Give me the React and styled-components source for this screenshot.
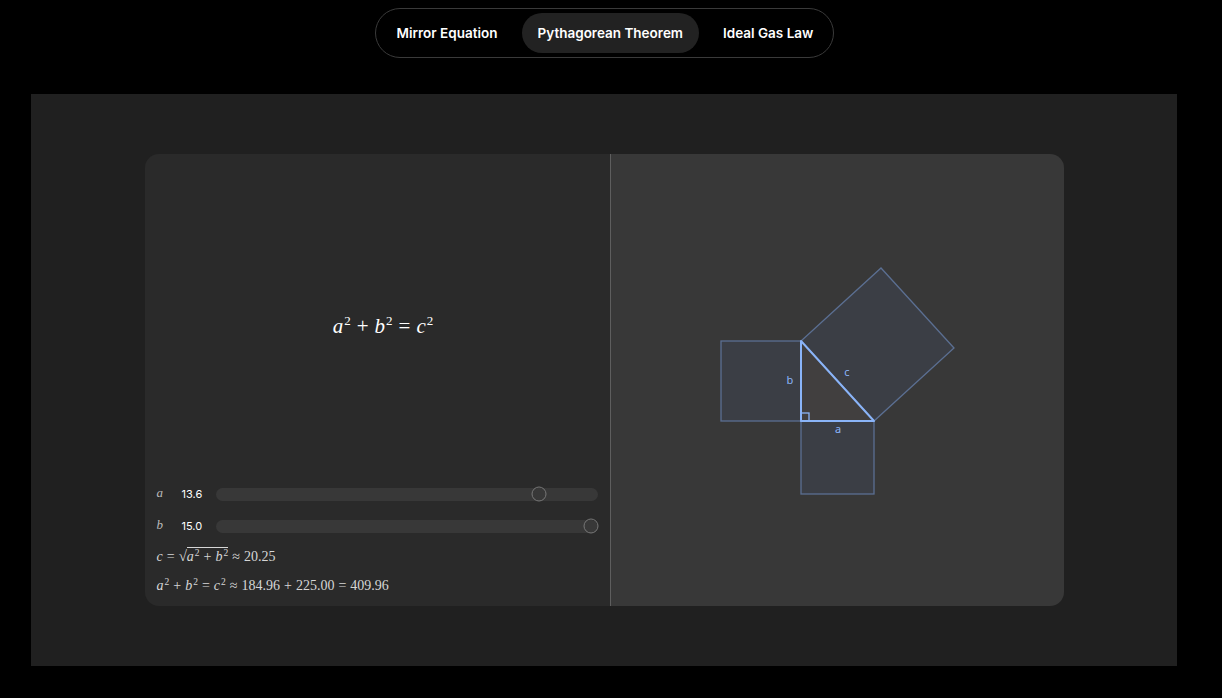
import React from "react";
import styled, { createGlobalStyle } from "styled-components";

const GlobalStyle = createGlobalStyle`
  html, body {
    margin: 0;
    padding: 0;
    background: #000000;
    font-family: Inter, "Noto Sans", sans-serif;
  }
`;

const tabs = ["Mirror Equation", "Pythagorean Theorem", "Ideal Gas Law"];

const A = 13.6;
const B = 15.0;
const MIN = 5;
const MAX = 15;

const Slider = ({ name, value }) => {
  const pct = (value - MIN) / (MAX - MIN);
  return (
    <SliderRow>
      <VarLabel>{name}</VarLabel>
      <Value>{value.toFixed(1)}</Value>
      <Track>
        <Thumb style={{ left: `calc(7px + ${pct} * (100% - 14px))` }} />
      </Track>
    </SliderRow>
  );
};

export default function App() {
  const c = Math.sqrt(A * A + B * B);
  return (
    <Page>
      <GlobalStyle />
      <TabBar>
        {tabs.map((t) => (
          <Tab key={t} $active={t === "Pythagorean Theorem"}>
            {t}
          </Tab>
        ))}
      </TabBar>
      <Stage>
        <Card>
          <LeftPane>
            <FormulaArea>
              <BigMath>
                <V>a</V>
                <Sup>2</Sup>
                <Op>+</Op>
                <V>b</V>
                <Sup>2</Sup>
                <Op>=</Op>
                <V>c</V>
                <Sup>2</Sup>
              </BigMath>
            </FormulaArea>
            <Controls>
              <Slider name="a" value={A} />
              <Slider name="b" value={B} />
              <SmallMath>
                <V>c</V>
                <Op $small>=</Op>
                <Root>√</Root>
                <Radicand>
                  <V>a</V>
                  <SupS>2</SupS>
                  <Op $small>+</Op>
                  <V>b</V>
                  <SupS>2</SupS>
                </Radicand>
                <Op $small>≈</Op>
                <span>{c.toFixed(2)}</span>
              </SmallMath>
              <SmallMath>
                <V>a</V>
                <SupS>2</SupS>
                <Op $small>+</Op>
                <V>b</V>
                <SupS>2</SupS>
                <Op $small>=</Op>
                <V>c</V>
                <SupS>2</SupS>
                <Op $small>≈</Op>
                <span>{(A * A).toFixed(2)}</span>
                <Op $small>+</Op>
                <span>{(B * B).toFixed(2)}</span>
                <Op $small>=</Op>
                <span>{(A * A + B * B).toFixed(2)}</span>
              </SmallMath>
            </Controls>
          </LeftPane>
          <RightPane>
            <Diagram viewBox="0 0 453 452" width="453" height="452">
              <g fill="#3b3e45" stroke="#5b6f92" strokeWidth="1.3">
                <rect x="110" y="187" width="80" height="80" />
                <rect x="190" y="267" width="73" height="73" />
                <polygon points="190,187 263,267 343,194 270,114" />
              </g>
              <polygon
                points="190,187 263,267 190,267"
                fill="#413f3f"
                stroke="#8ab4f8"
                strokeWidth="2"
                strokeLinejoin="round"
              />
              <rect x="190" y="259" width="8" height="8" fill="none" stroke="#8ab4f8" strokeWidth="1.3" />
              <g fill="#8ab4f8" fontFamily="'Noto Sans', sans-serif" fontSize="11" textAnchor="middle">
                <text x="179" y="230">b</text>
                <text x="236" y="222">c</text>
                <text x="227" y="279">a</text>
              </g>
            </Diagram>
          </RightPane>
        </Card>
      </Stage>
    </Page>
  );
}

const Page = styled.div`
  width: 1207px;
  min-height: 698px;
  display: flex;
  flex-direction: column;
  align-items: center;
  padding-top: 8px;
  box-sizing: border-box;
`;

const TabBar = styled.div`
  display: flex;
  align-items: center;
  gap: 8px;
  height: 50px;
  box-sizing: border-box;
  padding: 0 4px 0 5px;
  margin-left: 2px;
  border: 1px solid #3a3a3a;
  border-radius: 25px;
`;

const Tab = styled.div`
  height: 40px;
  display: flex;
  align-items: center;
  padding: 0 16px;
  border-radius: 20px;
  font-size: 13.5px;
  font-weight: 600;
  color: #ffffff;
  background: ${(p) => (p.$active ? "#222222" : "transparent")};
  white-space: nowrap;
`;

const Stage = styled.div`
  margin-top: 36px;
  width: 1146px;
  height: 572px;
  background: #202020;
  display: flex;
  align-items: center;
  justify-content: center;
  padding-left: 1px;
  box-sizing: border-box;
`;

const Card = styled.div`
  width: 919px;
  height: 452px;
  display: flex;
  border-radius: 14px;
  overflow: hidden;
`;

const LeftPane = styled.div`
  width: 466px;
  background: #2a2a2a;
  border-right: 1px solid #5e5e5e;
  display: flex;
  flex-direction: column;
  padding: 0 12px 6px 12px;
  box-sizing: border-box;
`;

const FormulaArea = styled.div`
  flex: 1;
  display: flex;
  align-items: center;
  justify-content: center;
  padding: 20px 0 0 12px;
`;

const BigMath = styled.div`
  font-family: "Liberation Serif", "DejaVu Serif", serif;
  font-size: 21px;
  color: #ffffff;
  white-space: nowrap;
`;

const V = styled.span`
  font-style: italic;
`;

const Sup = styled.sup`
  font-size: 13px;
  vertical-align: 8px;
  line-height: 0;
  margin-left: 1px;
`;

const SupS = styled.sup`
  font-size: 9.5px;
  vertical-align: 5px;
  line-height: 0;
  margin-left: 1px;
`;

const Op = styled.span`
  margin: 0 ${(p) => (p.$small ? "4px" : "6px")};
`;

const Controls = styled.div`
  display: flex;
  flex-direction: column;
`;

const SliderRow = styled.div`
  display: flex;
  align-items: center;
  height: 32px;
`;

const VarLabel = styled.span`
  width: 25px;
  font-family: "Liberation Serif", "DejaVu Serif", serif;
  font-style: italic;
  font-size: 13px;
  color: #bbbbbb;
  margin-top: -3px;
`;

const Value = styled.span`
  width: 34px;
  font-size: 11px;
  color: #ffffff;
`;

const Track = styled.div`
  flex: 1;
  position: relative;
  height: 13px;
  border-radius: 7px;
  background: #383838;
`;

const Thumb = styled.div`
  position: absolute;
  top: 50%;
  width: 15px;
  height: 15px;
  box-sizing: border-box;
  border: 1.5px solid #777777;
  border-radius: 50%;
  transform: translate(-50%, -50%);
`;

const SmallMath = styled.div`
  font-family: "Liberation Serif", "DejaVu Serif", serif;
  font-size: 14px;
  color: #d6d6d6;
  height: 29px;
  line-height: 29px;
  white-space: nowrap;
`;

const Root = styled.span`
  font-size: 15px;
`;

const Radicand = styled.span`
  display: inline-block;
  border-top: 1px solid #d6d6d6;
  line-height: 15px;
  padding-top: 1px;
`;

const RightPane = styled.div`
  flex: 1;
  background: #383838;
  display: flex;
`;

const Diagram = styled.svg`
  display: block;
`;
